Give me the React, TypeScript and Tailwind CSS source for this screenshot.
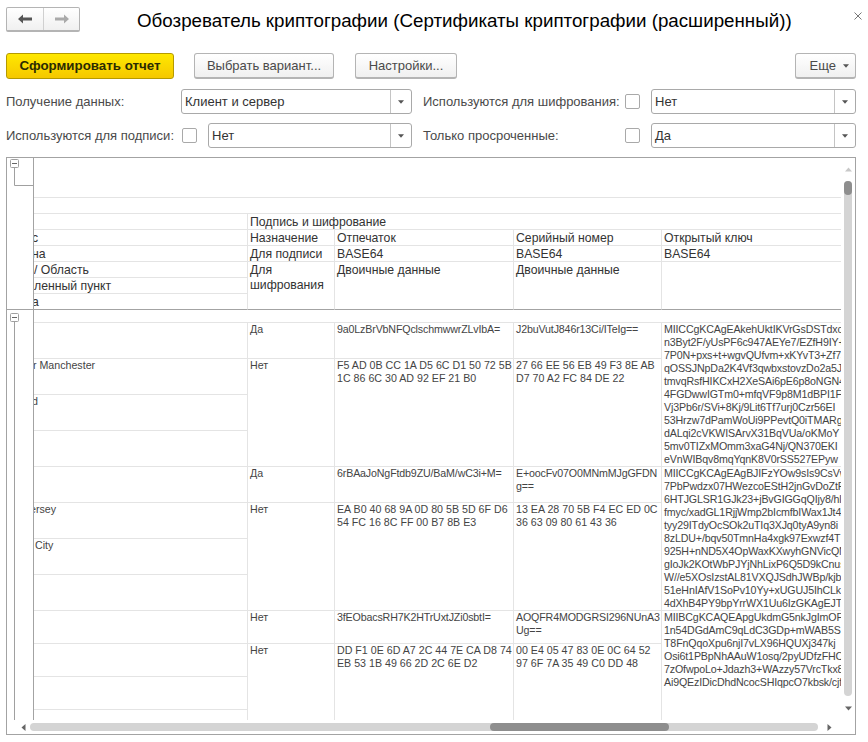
import React from "react";

const font = { fontFamily: '"Liberation Sans", Arial, sans-serif' };

const key1 = `MIICCgKCAgEAkehUktIKVrGsDSTdxc9
n3Byt2F/yUsPF6c947AEYe7/EZfH9IY+
7P0N+pxs+t+wgvQUfvm+xKYvT3+Zf7J
qOSSJNpDa2K4Vf3qwbxstovzDo2a5J
tmvqRsfHIKCxH2XeSAi6pE6p8oNGN4
4FGDwwIGTm0+mfqVF9p8M1dBPI1F
Vj3Pb6r/SVi+8Kj/9Lit6Tf7urj0Czr56EI
53Hrzw7dPamWoUi9PPevtQ0iTMARg
dALqi2cVKWISArvX31BqVUa/oKMoY
5mv0TIZxMOmm3xaG4Nj/QN370EKI
eVnWIBqv8mqYqnK8V0rSS527EPyw`;

const key2 = `MIICCgKCAgEAgBJIFzYOw9sIs9CsVw
7PbPwdzx07HWezcoEStH2jnGvDoZtF
6HTJGLSR1GJk23+jBvGIGGqQIjy8/hl
fmyc/xadGL1RjjWmp2bIcmfbIWax1Jt4
tyy29ITdyOcSOk2uTIq3XJq0tyA9yn8i
8zLDU+/bqv50TmnHa4xgk97Exwzf4T
925H+nND5X4OpWaxKXwyhGNVicQN
gIoJk2KOtWbPJYjNhLixP6Q5D9kCnus
W//e5XOsIzstAL81VXQJSdhJWBp/kjbr
51eHnIAfV1SoPv10Yy+xUGUJ5IhCLk
4dXhB4PY9bpYrrWX1Uu6IzGKAgEJT`;

const key3 = `MIIBCgKCAQEApgUkdmG5nkJgImOF
1n54DGdAmC9qLdC3GDp+mWAB5S
T8FnQqoXpu6njI7vLX96HQUXj347kj
Osi6t1PBpNhAAuW1osq/2pyUDfzFHC
7zOfwpoLo+Jdazh3+WAzzy57VrcTkx8
Ai9QEzIDicDhdNcocSHIqpcO7kbsk/cjf`;

function Tri({ dir = "down", color = "#555", size = 7 }: { dir?: "down" | "up" | "left" | "right"; color?: string; size?: number }) {
  const pts = {
    down: "0,1.5 7,1.5 3.5,5.5",
    up: "0,5.5 7,5.5 3.5,1.5",
    left: "5.5,0 5.5,7 1.5,3.5",
    right: "1.5,0 1.5,7 5.5,3.5",
  }[dir];
  return (
    <svg width={size} height={size} viewBox="0 0 7 7" className="shrink-0">
      <polygon points={pts} fill={color} />
    </svg>
  );
}

function Btn({ className, children }: { className: string; children: React.ReactNode }) {
  return (
    <div className={"flex h-[26px] items-center rounded-[3px] border border-b-2 border-[#b4b4b4] bg-gradient-to-b from-white to-[#f0f0f0] text-[13px] text-[#4a4a4a] " + className}>
      {children}
    </div>
  );
}

function Combo({ value, className }: { value: string; className: string }) {
  return (
    <div className={"flex h-[25px] items-center rounded-[3px] border border-[#a9a9a9] bg-white text-[13px] text-[#333] " + className}>
      <span className="flex-1 pl-[3px]">{value}</span>
      <div className="flex h-full w-[21px] items-center justify-center border-l border-[#c4c4c4]">
        <Tri size={6} />
      </div>
    </div>
  );
}

function Check({ className = "" }: { className?: string }) {
  return <div className={"h-[15px] w-[15px] shrink-0 rounded-[2px] border border-[#a9a9a9] bg-white " + className} />;
}

function Cell({ className = "", children }: { className?: string; children?: React.ReactNode }) {
  return <div className={"overflow-hidden whitespace-pre border-r border-b border-[#e4e4e4] px-[2px] " + className}>{children}</div>;
}

function Tight({ children }: { children: React.ReactNode }) {
  return <span className="tracking-[-0.15px]">{children}</span>;
}

const head = "text-[12.25px] leading-[16px] text-[#333]";
const data = "text-[10.67px] leading-[13px] text-[#444]";

function Left({ text, shift = "", last = false, small = false }: { text?: string; shift?: string; last?: boolean; small?: boolean }) {
  return (
    <Cell className={(small ? data : head) + " !pl-0 " + (last ? "border-b-[#a3a3a3]" : "")}>
      <div className={shift}>{text}</div>
    </Cell>
  );
}

function Tree({ height, tail }: { height: number; tail: string }) {
  return (
    <svg width="26" height={height} className="block">
      <rect x="3.5" y={tail === "corner" ? 1.5 : 3.5} width="8" height="8" rx="1" fill="#fff" stroke="#a0a0a0" />
      <line x1="5" x2="10" y1={tail === "corner" ? 5.5 : 7.5} y2={tail === "corner" ? 5.5 : 7.5} stroke="#666" />
      {tail === "corner" ? (
        <path d="M7.5 9.5V27.5H26" fill="none" stroke="#a0a0a0" />
      ) : (
        <line x1="7.5" x2="7.5" y1="11.5" y2={height} stroke="#a0a0a0" />
      )}
    </svg>
  );
}

function Record({ fp, sn, keyText, flag, flag2, fp2, sn2, left }: {
  fp: string; sn: string; keyText: string; flag: string; flag2: string; fp2: string; sn2: string;
  left: { text?: string; shift?: string }[];
}) {
  return (
    <>
      <Left small />
      <Cell className={data}>{flag}</Cell>
      <Cell className={data}><Tight>{fp}</Tight></Cell>
      <Cell className={data}><Tight>{sn}</Tight></Cell>
      <Cell className={data + " row-span-4 !border-r-0"}><Tight>{keyText}</Tight></Cell>
      <Left small text={left[0].text} shift={left[0].shift} />
      <Cell className={data + " row-span-3"}>{flag2}</Cell>
      <Cell className={data + " row-span-3"}>{fp2}</Cell>
      <Cell className={data + " row-span-3"}>{sn2}</Cell>
      <Left small text={left[1].text} shift={left[1].shift} />
      <Left small />
    </>
  );
}

export default function App() {
  return (
    <div className="flex h-[742px] w-[868px] flex-col overflow-hidden bg-white pl-[6px] pr-[12px]" style={font}>
      <div className="-mr-[12px] flex h-[53px] items-start pt-[7px]">
        <div className="flex h-[25px] w-[74px] rounded-[2px] border border-b-2 border-[#b4b4b4] bg-gradient-to-b from-white to-[#f0f0f0]">
          <div className="flex w-[37px] items-center justify-center border-r border-[#d0d0d0]">
            <svg width="14" height="10" viewBox="0 0 14 10"><path d="M0 5L5 0.5V3.5H14V6.5H5V9.5Z" fill="#555" /></svg>
          </div>
          <div className="flex flex-1 items-center justify-center">
            <svg width="14" height="10" viewBox="0 0 14 10"><path d="M14 5L9 0.5V3.5H0V6.5H9V9.5Z" fill="#aaa" /></svg>
          </div>
        </div>
        <div className="ml-[57px] flex-1 whitespace-nowrap text-[18.75px] leading-[28px] text-black">
          Обозреватель криптографии (Сертификаты криптографии (расширенный))
        </div>
        <svg width="8" height="8" viewBox="0 0 8 8" className="mr-[6px] mt-[5px]">
          <path d="M0.5 0.5L7.5 7.5M7.5 0.5L0.5 7.5" stroke="#777" />
        </svg>
      </div>

      <div className="flex">
        <div className="flex h-[26px] w-[168px] items-center justify-center rounded-[3px] border border-[#b59a00] bg-gradient-to-b from-[#ffe800] to-[#f5c800] text-[13.33px] font-bold text-[#2b2b00]">
          Сформировать отчет
        </div>
        <Btn className="ml-[20px] w-[140px] justify-center">Выбрать вариант...</Btn>
        <Btn className="ml-[21px] w-[102px] justify-center">Настройки...</Btn>
        <Btn className="ml-auto w-[61px] justify-end gap-[7px] pr-[6px]">
          Еще
          <Tri size={6} />
        </Btn>
      </div>

      <div className="mt-[10px] flex items-center text-[13px] text-[#4a4a4a]">
        <span className="w-[175px]">Получение данных:</span>
        <Combo value="Клиент и сервер" className="w-[231px]" />
        <span className="ml-[11px] w-[202px]">Используются для шифрования:</span>
        <Check />
        <Combo value="Нет" className="ml-[11px] w-[205px]" />
      </div>

      <div className="mt-[9px] flex items-center text-[13px] text-[#4a4a4a]">
        <span className="w-[176px]">Используются для подписи:</span>
        <Check />
        <Combo value="Нет" className="ml-[11px] w-[204px]" />
        <span className="ml-[11px] w-[202px]">Только просроченные:</span>
        <Check />
        <Combo value="Да" className="ml-[11px] w-[205px]" />
      </div>

      <div className="mt-[9px] flex h-[578px] w-[850px] flex-col border border-[#a3a3a3]">
        <div className="flex h-[562px]">
          <div className="w-[27px] shrink-0 border-r border-[#a3a3a3]">
            <div className="h-[152px] border-b border-[#a3a3a3]">
              <Tree height={151} tail="corner" />
            </div>
            <Tree height={410} tail="line" />
          </div>

          <div className="grid flex-1 grid-cols-[214px_87px_179px_148px_179px] grid-rows-[40px_repeat(7,16px)_13px_repeat(8,36px)_repeat(4,33px)] overflow-hidden">
            <Cell className="col-span-5 !border-r-0" />
            <Cell className="col-span-5 !border-r-0" />
            <Left />
            <Cell className={head + " col-span-4 !border-r-0"}>Подпись и шифрование</Cell>

            <Left text="с" shift="-ml-[2px]" />
            <Cell className={head}>Назначение</Cell>
            <Cell className={head}>Отпечаток</Cell>
            <Cell className={head}>Серийный номер</Cell>
            <Cell className={head + " !border-r-0"}>Открытый ключ</Cell>

            <Left text="на" shift="-ml-[2px]" />
            <Cell className={head}>Для подписи</Cell>
            <Cell className={head}>BASE64</Cell>
            <Cell className={head}>BASE64</Cell>
            <Cell className={head + " !border-r-0"}>BASE64</Cell>

            <Left text="/ Область" />
            <Cell className={head + " row-span-3 border-b-[#a3a3a3] !leading-[15px] pt-[1px]"}>{"Для\nшифрования"}</Cell>
            <Cell className={head + " row-span-3 border-b-[#a3a3a3]"}>Двоичные данные</Cell>
            <Cell className={head + " row-span-3 border-b-[#a3a3a3]"}>Двоичные данные</Cell>
            <Cell className="row-span-3 border-b-[#a3a3a3] !border-r-0" />
            <Left text="ленный пункт" />
            <Left text="а" shift="-ml-[2px]" last />

            <Cell className="col-span-5 !border-r-0" />

            <Record
              flag="Да"
              fp="9a0LzBrVbNFQclschmwwrZLvIbA="
              sn="J2buVutJ846r13Ci/ITeIg=="
              keyText={key1}
              flag2="Нет"
              fp2={"F5 AD 0B CC 1A D5 6C D1 50 72 5B\n1C 86 6C 30 AD 92 EF 21 B0"}
              sn2={"27 66 EE 56 EB 49 F3 8E AB\nD7 70 A2 FC 84 DE 22"}
              left={[{ text: "er Manchester", shift: "-ml-[7px]" }, { text: "d", shift: "-ml-[2px]" }]}
            />
            <Record
              flag="Да"
              fp="6rBAaJoNgFtdb9ZU/BaM/wC3i+M="
              sn={"E+oocFv07O0MNmMJgGFDN\ng=="}
              keyText={key2}
              flag2="Нет"
              fp2={"EA B0 40 68 9A 0D 80 5B 5D 6F D6\n54 FC 16 8C FF 00 B7 8B E3"}
              sn2={"13 EA 28 70 5B F4 EC ED 0C\n36 63 09 80 61 43 36"}
              left={[{ text: "ersey", shift: "-ml-[4px]" }, { text: "City", shift: "ml-[1px]" }]}
            />
            <Record
              flag="Нет"
              fp="3fEObacsRH7K2HTrUxtJZi0sbtI="
              sn={"AOQFR4MODGRSI296NUnA3\nUg=="}
              keyText={key3}
              flag2="Нет"
              fp2={"DD F1 0E 6D A7 2C 44 7E CA D8 74\nEB 53 1B 49 66 2D 2C 6E D2"}
              sn2={"00 E4 05 47 83 0E 0C 64 52\n97 6F 7A 35 49 C0 DD 48"}
              left={[{}, {}]}
            />
          </div>

          <div className="flex w-[14px] shrink-0 flex-col items-center">
            <div className="flex h-[23px] items-center justify-center">
              <Tri dir="up" color="#c8c8c8" />
            </div>
            <div className="h-[515px] w-[8px] rounded-full bg-[#d4d4d4]">
              <div className="h-[14px] rounded-full bg-[#8e8e8e]" />
            </div>
            <div className="flex h-[24px] items-center justify-center">
              <Tri dir="down" color="#666" />
            </div>
          </div>
        </div>

        <div className="flex h-[14px] items-center">
          <div className="flex w-[23px] justify-end pr-[3px]">
            <Tri dir="left" color="#666" />
          </div>
          <div className="h-[8px] w-[788px] rounded-full bg-[#d4d4d4] pl-[460px]">
            <div className="h-[8px] w-[179px] rounded-full bg-[#8e8e8e]" />
          </div>
          <div className="flex flex-1 pl-[8px]">
            <Tri dir="right" color="#666" />
          </div>
        </div>
      </div>
    </div>
  );
}
